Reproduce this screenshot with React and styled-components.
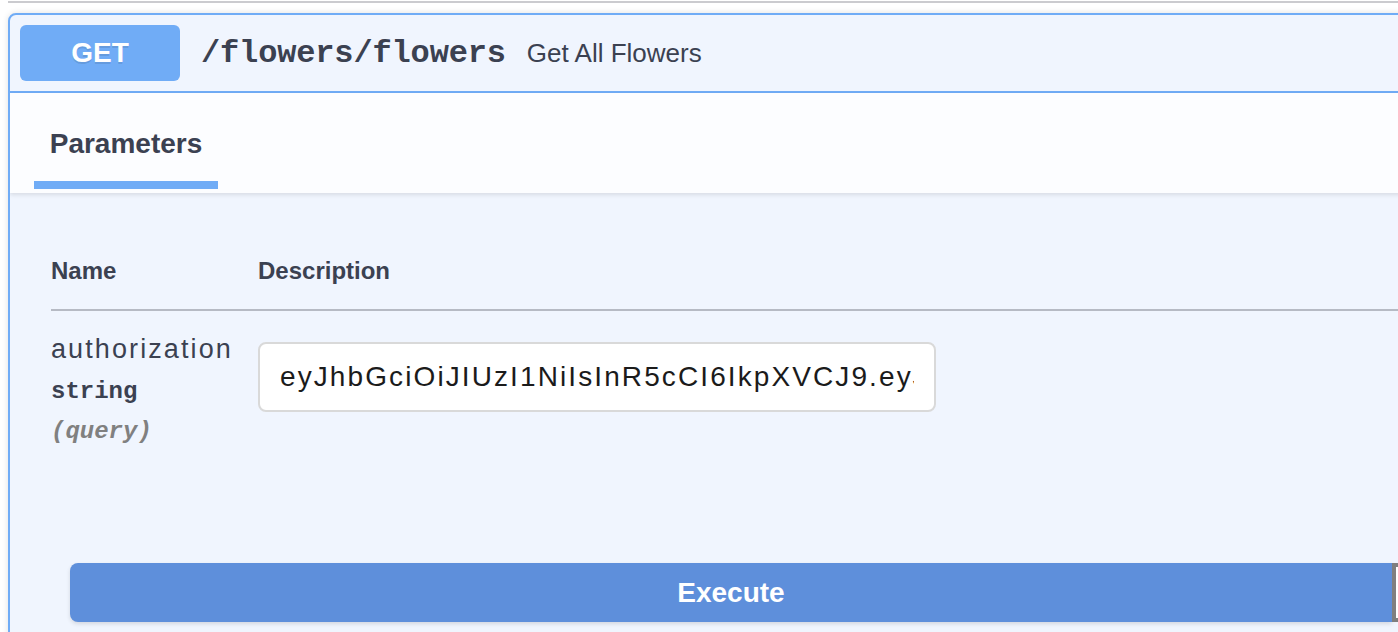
import React from "react";
import styled, { createGlobalStyle } from "styled-components";

const Global = createGlobalStyle`
  html, body {
    margin: 0;
    padding: 0;
    background: #ffffff;
    overflow: hidden;
  }
  body {
    font-family: "Liberation Sans", Arial, sans-serif;
    color: #3b4151;
  }
`;

const Page = styled.div`
  width: 1398px;
  height: 632px;
  overflow: hidden;
`;

const TopRule = styled.div`
  margin: 1px 0 0 8px;
  height: 2px;
  background: #cbcbcf;
`;

const Card = styled.section`
  margin: 10px 0 0 8px;
  width: 2790px;
  border: 2px solid #70acf6;
  border-radius: 8px;
  background: #f0f5fe;
  box-shadow: 0 0 6px rgba(0, 0, 0, 0.12);
  overflow: hidden;
`;

const Summary = styled.div`
  display: flex;
  align-items: center;
  padding: 10px;
  border-bottom: 2px solid #70acf6;
`;

const Method = styled.span`
  display: flex;
  align-items: center;
  justify-content: center;
  width: 160px;
  height: 56px;
  border-radius: 6px;
  background: #70acf6;
  color: #ffffff;
  font-weight: 700;
  font-size: 28px;
  text-shadow: 0 2px 0 rgba(0, 0, 0, 0.1);
`;

const Path = styled.span`
  margin-left: 21px;
  font-family: "Liberation Mono", "Courier New", monospace;
  font-weight: 700;
  font-size: 32px;
  letter-spacing: -0.15px;
  color: #3b4151;
`;

const SummaryDesc = styled.span`
  margin-left: 21px;
  font-size: 26px;
  color: #3b4151;
`;

const SectionHeader = styled.div`
  display: flex;
  padding-left: 24px;
  background: #fcfdff;
  box-shadow: 0 2px 4px rgba(0, 0, 0, 0.1);
  position: relative;
`;

const Tab = styled.div`
  width: 184px;
  padding: 35px 0 21px;
  margin-bottom: 4px;
  border-bottom: 8px solid #70acf6;
  text-align: center;
  font-size: 28px;
  line-height: 32px;
  font-weight: 700;
  color: #3b4151;
`;

const Body = styled.div`
  padding: 64px 0 0 41px;
`;

const HeadRow = styled.div`
  display: grid;
  grid-template-columns: 207px 1fr;
  padding-bottom: 24px;
  border-bottom: 2px solid #b6bac4;
  font-size: 24px;
  line-height: 28px;
  font-weight: 700;
  color: #3b4151;
`;

const ParamRow = styled.div`
  display: grid;
  grid-template-columns: 207px 1fr;
  padding-top: 22px;
`;

const NameCell = styled.div`
  display: flex;
  flex-direction: column;
`;

const ParamName = styled.div`
  font-size: 27px;
  line-height: 32px;
  letter-spacing: 2.1px;
  color: #3b4151;
`;

const ParamType = styled.div`
  padding-top: ${(p) => p.$gap}px;
  font-family: "Liberation Mono", "Courier New", monospace;
  font-size: 24px;
  line-height: 28px;
  font-weight: 700;
  font-style: ${(p) => (p.$italic ? "italic" : "normal")};
  color: ${(p) => (p.$muted ? "#808080" : "#3b4151")};
`;

const Input = styled.input`
  box-sizing: border-box;
  margin-top: 9px;
  width: 678px;
  height: 70px;
  padding: 0 20px;
  border: 2px solid #d9d9d9;
  border-radius: 8px;
  background: #ffffff;
  font-family: "Liberation Sans", Arial, sans-serif;
  font-size: 28px;
  letter-spacing: 2.1px;
  color: #1b1b1b;
  outline: none;
`;

const ExecuteWrapper = styled.div`
  display: flex;
  padding: 117px 0 40px 60px;
`;

const ExecuteButton = styled.button`
  width: 1322px;
  height: 59px;
  border: none;
  border-radius: 8px 0 0 8px;
  background: #5e8fdb;
  color: #ffffff;
  font-family: "Liberation Sans", Arial, sans-serif;
  font-size: 28px;
  font-weight: 700;
  box-shadow: 0 2px 4px rgba(0, 0, 0, 0.12);
`;

const ClearButton = styled.button`
  width: 1322px;
  height: 59px;
  border: 4px solid #7f7f7f;
  border-radius: 0 8px 8px 0;
  background: #ffffff;
`;

export default function App() {
  return (
    <Page>
      <Global />
      <TopRule />
      <Card>
        <Summary>
          <Method>GET</Method>
          <Path>/flowers/flowers</Path>
          <SummaryDesc>Get All Flowers</SummaryDesc>
        </Summary>
        <SectionHeader>
          <Tab>Parameters</Tab>
        </SectionHeader>
        <Body>
          <HeadRow>
            <span>Name</span>
            <span>Description</span>
          </HeadRow>
          <ParamRow>
            <NameCell>
              <ParamName>authorization</ParamName>
              <ParamType $gap={13}>string</ParamType>
              <ParamType $gap={12} $italic $muted>
                (query)
              </ParamType>
            </NameCell>
            <div>
              <Input
                type="text"
                defaultValue="eyJhbGciOiJIUzI1NiIsInR5cCI6IkpXVCJ9.eyJzdWIiOiIxMjM0NTY3ODkwIn0"
              />
            </div>
          </ParamRow>
        </Body>
        <ExecuteWrapper>
          <ExecuteButton>Execute</ExecuteButton>
          <ClearButton aria-label="Clear" />
        </ExecuteWrapper>
      </Card>
    </Page>
  );
}
